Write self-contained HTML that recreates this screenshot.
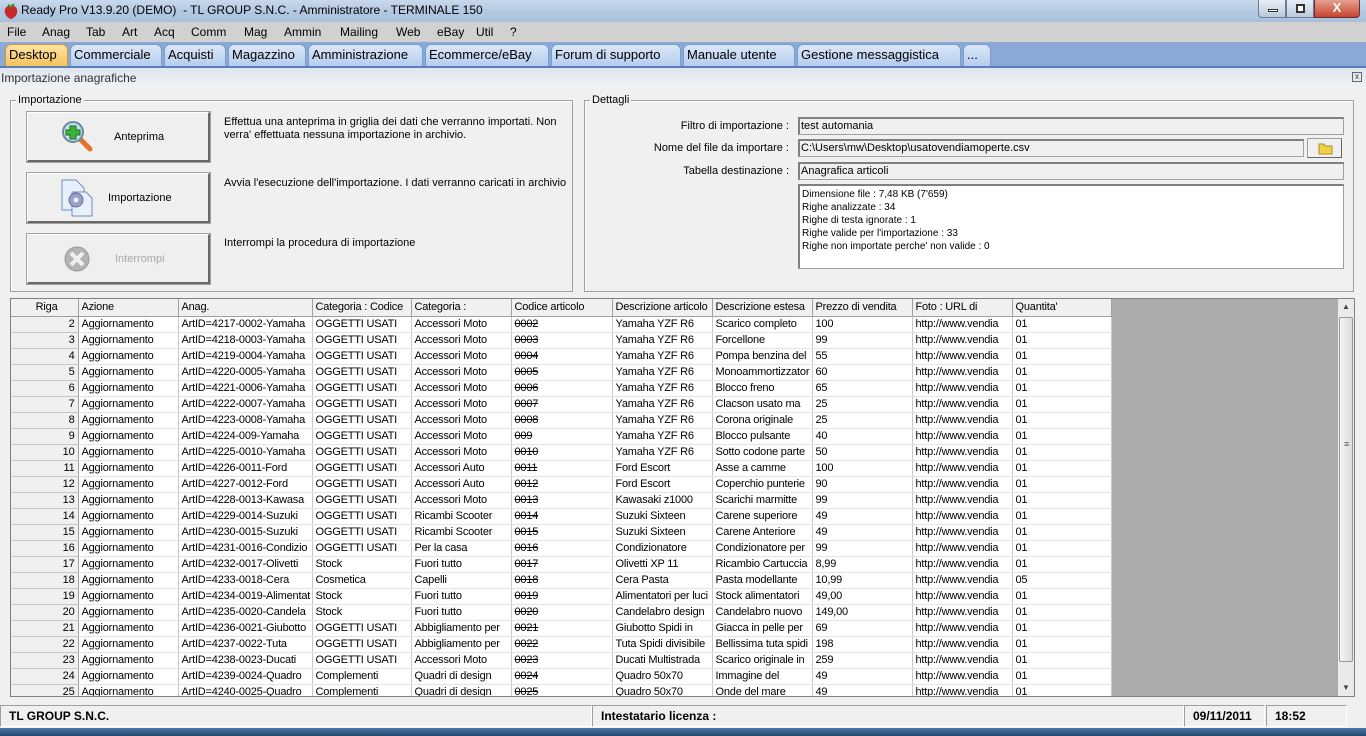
<!DOCTYPE html>
<html><head><meta charset="utf-8"><style>
*{box-sizing:border-box;margin:0;padding:0}
body{width:1366px;height:736px;overflow:hidden;background:#f0f0f0;font-family:"Liberation Sans",sans-serif;font-size:11px;color:#000;position:relative}
.abs{position:absolute}
#title{left:0;top:0;width:1366px;height:22px;background:linear-gradient(#c9d9ec,#b4c9e2 50%,#a9c0dc);}
#title span{position:absolute;left:21px;top:3px;font-size:12px;color:#000}
#menu{left:0;top:22px;width:1366px;height:20px;background:#d1d1d1;font-size:12px}
#menu span{position:absolute;top:3px}
#tabs{left:0;top:42px;width:1366px;height:26px;background:#8aa9d6;border-bottom:2px solid #5a7fb8}
.tab{position:absolute;top:2px;height:22px;background:linear-gradient(#dbe7f7,#b4cdef);border:1px solid #7c9cc9;border-bottom:none;border-radius:6px 6px 0 0;font-size:13px;padding:2px 4px 0 3px;white-space:nowrap}
#ph{left:0;top:68px;width:1366px;height:20px;background:linear-gradient(#dfe6ef,#f0f2f5);font-size:12px;color:#333}
.grp{border:1px solid #a0a0a0;box-shadow:inset 1px 1px 0 #fff}
.lg{position:absolute;top:-7px;background:#f0f0f0;padding:0 2px;font-size:11px}
.btn{position:absolute;width:183px;height:50px;background:#efefef;border:1px solid #fff;border-right:2px solid #696969;border-bottom:2px solid #696969;outline:1px solid #a0a0a0;font-size:11px}
.btn span{position:absolute;top:18px}
.desc{position:absolute;font-size:11px;line-height:13px;width:340px}
.lab{position:absolute;width:200px;text-align:right;font-size:11px}
.fld{position:absolute;height:18px;background:#f0f0f0;border:1px solid #a0a0a0;border-top:2px solid #808080;border-left:2px solid #808080;padding:1px 0 0 1px;font-size:11px}
#grid{left:10px;top:298px;width:1345px;height:399px;border:1px solid #808080;background:#ababab;overflow:hidden}
table{border-collapse:collapse;table-layout:fixed;width:1100px;background:#fff;position:absolute;left:0;top:0}
td,th{height:16px;border-right:1px solid #c8c8c8;border-bottom:1px solid #e4e4e4;white-space:nowrap;overflow:hidden;padding:0 3px;font-weight:normal;text-align:left;font-size:11px;line-height:14px;letter-spacing:-0.2px}
th{background:#f0f0f0;height:17px;border-right:1px solid #a0a0a0;border-bottom:1px solid #a0a0a0}
td.r{background:#f0f0f0;text-align:right;border-right:1px solid #a0a0a0;border-bottom:1px solid #c8c8c8}
td.s{text-decoration:line-through}
#sb{left:1327px;top:0;width:16px;height:397px;background:#eaeaea}
#status{left:0;top:705px;width:1366px;height:23px;font-size:12px;font-weight:normal}
.sp{position:absolute;top:0;height:22px;border:1px solid #a0a0a0;border-right-color:#fff;border-bottom-color:#fff;padding:3px 0 0 8px}
#task{left:0;top:728px;width:1366px;height:8px;background:linear-gradient(#4a7aa8,#23466e)}
</style></head><body>
<div id="title" class="abs">
<svg class="abs" style="left:3px;top:3px" width="16" height="16"><path d="M8 3 C3 2 1 6 2 10 C3 14 7 16 8 16 C9 16 13 14 14 10 C15 6 13 2 8 3Z" fill="#c8282a"/><path d="M5 2 L8 4 L11 1" stroke="#3a8a2a" stroke-width="2" fill="none"/></svg>
<span>Ready Pro V13.9.20 (DEMO)&nbsp; - TL GROUP S.N.C. - Amministratore - TERMINALE 150</span>
<div class="abs" style="left:1258px;top:0;width:28px;height:18px;border:1px solid #6a7d94;border-top:none;background:linear-gradient(#e8eef6,#b9c9dc);border-radius:0 0 0 4px"><div class="abs" style="left:9px;top:9px;width:10px;height:3px;background:#fff;border:1px solid #333"></div></div>
<div class="abs" style="left:1286px;top:0;width:28px;height:18px;border:1px solid #6a7d94;border-top:none;background:linear-gradient(#e8eef6,#b9c9dc)"><div class="abs" style="left:9px;top:4px;width:9px;height:9px;border:2px solid #333;background:#fff"></div></div>
<div class="abs" style="left:1314px;top:0;width:46px;height:18px;border:1px solid #6a3030;border-top:none;background:linear-gradient(#e5a090,#c7442e);border-radius:0 0 4px 0;color:#fff;font-weight:bold;font-size:13px;text-align:center;line-height:16px">X</div>
</div>
<div id="menu" class="abs">
<span style="left:7px">File</span><span style="left:42px">Anag</span><span style="left:86px">Tab</span><span style="left:122px">Art</span><span style="left:154px">Acq</span><span style="left:191px">Comm</span><span style="left:244px">Mag</span><span style="left:284px">Ammin</span><span style="left:340px">Mailing</span><span style="left:396px">Web</span><span style="left:437px">eBay</span><span style="left:476px">Util</span><span style="left:510px">?</span>
</div>
<div id="tabs" class="abs">
<div class="tab" style="left:5px;width:63px;background:linear-gradient(#fde3a6,#f6c25a);border-color:#c59a40">Desktop</div>
<div class="tab" style="left:70px;width:92px">Commerciale</div>
<div class="tab" style="left:164px;width:62px">Acquisti</div>
<div class="tab" style="left:228px;width:78px">Magazzino</div>
<div class="tab" style="left:308px;width:115px">Amministrazione</div>
<div class="tab" style="left:425px;width:124px">Ecommerce/eBay</div>
<div class="tab" style="left:551px;width:130px">Forum di supporto</div>
<div class="tab" style="left:683px;width:112px">Manuale utente</div>
<div class="tab" style="left:797px;width:164px">Gestione messaggistica</div>
<div class="tab" style="left:963px;width:28px">...</div>
</div>
<div id="ph" class="abs"><span class="abs" style="left:1px;top:3px">Importazione anagrafiche</span><div class="abs" style="left:1352px;top:4px;width:10px;height:10px;border:1px solid #666;font-size:8px;line-height:8px;text-align:center">x</div></div>

<div class="abs grp" style="left:10px;top:100px;width:563px;height:192px"><span class="lg" style="left:5px">Importazione</span></div>
<div class="btn" style="left:27px;top:112px">
<svg class="abs" style="left:32px;top:6px" width="34" height="34"><line x1="18" y1="18" x2="30" y2="30" stroke="#e8702a" stroke-width="5" stroke-linecap="round"/><circle cx="13" cy="13" r="10" fill="#bfe0ef" stroke="#6a8aa0" stroke-width="2"/><path d="M10 7h6v4h4v5h-4v4h-6v-4h-4v-5h4z" fill="#3cb43c" stroke="#1f6f1f"/></svg>
<span style="left:86px">Anteprima</span></div>
<div class="btn" style="left:27px;top:173px">
<svg class="abs" style="left:32px;top:4px" width="34" height="40"><path d="M2 2h14l8 8v22H2z" fill="#e8f0fa" stroke="#6b8fc0"/><path d="M12 14h14l6 6v18H12z" fill="#e8f0fa" stroke="#6b8fc0"/><circle cx="16" cy="22" r="7" fill="#9aa0c8" stroke="#6a6f99"/><circle cx="16" cy="22" r="2.5" fill="#e8f0fa"/></svg>
<span style="left:80px">Importazione</span></div>
<div class="btn" style="left:27px;top:234px">
<svg class="abs" style="left:35px;top:10px" width="28" height="28"><circle cx="14" cy="14" r="12" fill="#b4b4b4" stroke="#9a9a9a"/><path d="M8 8l12 12M20 8L8 20" stroke="#f0f0f0" stroke-width="4"/></svg>
<span style="left:87px;color:#a8a8a8">Interrompi</span></div>
<div class="desc" style="left:224px;top:116px">Effettua una anteprima in griglia dei dati che verranno importati. Non verra' effettuata nessuna importazione in archivio.</div>
<div class="desc" style="left:224px;top:177px;width:360px">Avvia l'esecuzione dell'importazione. I dati verranno caricati in archivio</div>
<div class="desc" style="left:224px;top:237px">Interrompi la procedura di importazione</div>

<div class="abs grp" style="left:584px;top:100px;width:770px;height:192px"><span class="lg" style="left:5px">Dettagli</span></div>
<div class="lab" style="left:589px;top:120px">Filtro di importazione :</div>
<div class="lab" style="left:589px;top:142px">Nome del file da importare :</div>
<div class="lab" style="left:589px;top:165px">Tabella destinazione :</div>
<div class="fld" style="left:798px;top:117px;width:546px">test automania</div>
<div class="fld" style="left:798px;top:139px;width:506px">C:\Users\mw\Desktop\usatovendiamoperte.csv</div>
<div class="abs" style="left:1307px;top:138px;width:35px;height:20px;border:1px solid #a0a0a0;border-right-color:#666;border-bottom-color:#666;background:#f0f0f0"><svg class="abs" style="left:10px;top:2px" width="16" height="14"><path d="M1 3h5l1 2h7v8H1z" fill="#f3d04a" stroke="#b08a20"/></svg></div>
<div class="fld" style="left:798px;top:162px;width:546px">Anagrafica articoli</div>
<div class="abs" style="left:798px;top:184px;width:546px;height:85px;background:#fff;border:1px solid #a0a0a0;border-top:2px solid #808080;border-left:2px solid #808080;padding:2px 0 0 2px;font-size:10px;line-height:13px">Dimensione file : 7,48 KB (7'659)<br>Righe analizzate : 34<br>Righe di testa ignorate : 1<br>Righe valide per l'importazione : 33<br>Righe non importate perche' non valide : 0</div>

<div id="grid" class="abs">
<table>
<colgroup><col style="width:67px"><col style="width:100px"><col style="width:134px"><col style="width:99px"><col style="width:100px"><col style="width:101px"><col style="width:100px"><col style="width:100px"><col style="width:100px"><col style="width:100px"><col style="width:99px"></colgroup>
<tr><th style="text-align:right;padding-right:20px">Riga</th><th>Azione</th><th>Anag.</th><th>Categoria : Codice</th><th>Categoria :</th><th>Codice articolo</th><th>Descrizione articolo</th><th>Descrizione estesa</th><th>Prezzo di vendita</th><th>Foto : URL di</th><th>Quantita'</th></tr>
<tr><td class="r">2</td><td>Aggiornamento</td><td>ArtID=4217-0002-Yamaha</td><td>OGGETTI USATI</td><td>Accessori Moto</td><td class="s">0002</td><td>Yamaha YZF R6</td><td>Scarico completo</td><td>100</td><td>http://www.vendia</td><td>01</td></tr>
<tr><td class="r">3</td><td>Aggiornamento</td><td>ArtID=4218-0003-Yamaha</td><td>OGGETTI USATI</td><td>Accessori Moto</td><td class="s">0003</td><td>Yamaha YZF R6</td><td>Forcellone</td><td>99</td><td>http://www.vendia</td><td>01</td></tr>
<tr><td class="r">4</td><td>Aggiornamento</td><td>ArtID=4219-0004-Yamaha</td><td>OGGETTI USATI</td><td>Accessori Moto</td><td class="s">0004</td><td>Yamaha YZF R6</td><td>Pompa benzina del</td><td>55</td><td>http://www.vendia</td><td>01</td></tr>
<tr><td class="r">5</td><td>Aggiornamento</td><td>ArtID=4220-0005-Yamaha</td><td>OGGETTI USATI</td><td>Accessori Moto</td><td class="s">0005</td><td>Yamaha YZF R6</td><td>Monoammortizzator</td><td>60</td><td>http://www.vendia</td><td>01</td></tr>
<tr><td class="r">6</td><td>Aggiornamento</td><td>ArtID=4221-0006-Yamaha</td><td>OGGETTI USATI</td><td>Accessori Moto</td><td class="s">0006</td><td>Yamaha YZF R6</td><td>Blocco freno</td><td>65</td><td>http://www.vendia</td><td>01</td></tr>
<tr><td class="r">7</td><td>Aggiornamento</td><td>ArtID=4222-0007-Yamaha</td><td>OGGETTI USATI</td><td>Accessori Moto</td><td class="s">0007</td><td>Yamaha YZF R6</td><td>Clacson usato ma</td><td>25</td><td>http://www.vendia</td><td>01</td></tr>
<tr><td class="r">8</td><td>Aggiornamento</td><td>ArtID=4223-0008-Yamaha</td><td>OGGETTI USATI</td><td>Accessori Moto</td><td class="s">0008</td><td>Yamaha YZF R6</td><td>Corona originale</td><td>25</td><td>http://www.vendia</td><td>01</td></tr>
<tr><td class="r">9</td><td>Aggiornamento</td><td>ArtID=4224-009-Yamaha</td><td>OGGETTI USATI</td><td>Accessori Moto</td><td class="s">009</td><td>Yamaha YZF R6</td><td>Blocco pulsante</td><td>40</td><td>http://www.vendia</td><td>01</td></tr>
<tr><td class="r">10</td><td>Aggiornamento</td><td>ArtID=4225-0010-Yamaha</td><td>OGGETTI USATI</td><td>Accessori Moto</td><td class="s">0010</td><td>Yamaha YZF R6</td><td>Sotto codone parte</td><td>50</td><td>http://www.vendia</td><td>01</td></tr>
<tr><td class="r">11</td><td>Aggiornamento</td><td>ArtID=4226-0011-Ford</td><td>OGGETTI USATI</td><td>Accessori Auto</td><td class="s">0011</td><td>Ford Escort</td><td>Asse a camme</td><td>100</td><td>http://www.vendia</td><td>01</td></tr>
<tr><td class="r">12</td><td>Aggiornamento</td><td>ArtID=4227-0012-Ford</td><td>OGGETTI USATI</td><td>Accessori Auto</td><td class="s">0012</td><td>Ford Escort</td><td>Coperchio punterie</td><td>90</td><td>http://www.vendia</td><td>01</td></tr>
<tr><td class="r">13</td><td>Aggiornamento</td><td>ArtID=4228-0013-Kawasa</td><td>OGGETTI USATI</td><td>Accessori Moto</td><td class="s">0013</td><td>Kawasaki z1000</td><td>Scarichi marmitte</td><td>99</td><td>http://www.vendia</td><td>01</td></tr>
<tr><td class="r">14</td><td>Aggiornamento</td><td>ArtID=4229-0014-Suzuki</td><td>OGGETTI USATI</td><td>Ricambi Scooter</td><td class="s">0014</td><td>Suzuki Sixteen</td><td>Carene superiore</td><td>49</td><td>http://www.vendia</td><td>01</td></tr>
<tr><td class="r">15</td><td>Aggiornamento</td><td>ArtID=4230-0015-Suzuki</td><td>OGGETTI USATI</td><td>Ricambi Scooter</td><td class="s">0015</td><td>Suzuki Sixteen</td><td>Carene Anteriore</td><td>49</td><td>http://www.vendia</td><td>01</td></tr>
<tr><td class="r">16</td><td>Aggiornamento</td><td>ArtID=4231-0016-Condizio</td><td>OGGETTI USATI</td><td>Per la casa</td><td class="s">0016</td><td>Condizionatore</td><td>Condizionatore per</td><td>99</td><td>http://www.vendia</td><td>01</td></tr>
<tr><td class="r">17</td><td>Aggiornamento</td><td>ArtID=4232-0017-Olivetti</td><td>Stock</td><td>Fuori tutto</td><td class="s">0017</td><td>Olivetti XP 11</td><td>Ricambio Cartuccia</td><td>8,99</td><td>http://www.vendia</td><td>01</td></tr>
<tr><td class="r">18</td><td>Aggiornamento</td><td>ArtID=4233-0018-Cera</td><td>Cosmetica</td><td>Capelli</td><td class="s">0018</td><td>Cera Pasta</td><td>Pasta modellante</td><td>10,99</td><td>http://www.vendia</td><td>05</td></tr>
<tr><td class="r">19</td><td>Aggiornamento</td><td>ArtID=4234-0019-Alimentat</td><td>Stock</td><td>Fuori tutto</td><td class="s">0019</td><td>Alimentatori per luci</td><td>Stock alimentatori</td><td>49,00</td><td>http://www.vendia</td><td>01</td></tr>
<tr><td class="r">20</td><td>Aggiornamento</td><td>ArtID=4235-0020-Candela</td><td>Stock</td><td>Fuori tutto</td><td class="s">0020</td><td>Candelabro design</td><td>Candelabro nuovo</td><td>149,00</td><td>http://www.vendia</td><td>01</td></tr>
<tr><td class="r">21</td><td>Aggiornamento</td><td>ArtID=4236-0021-Giubotto</td><td>OGGETTI USATI</td><td>Abbigliamento per</td><td class="s">0021</td><td>Giubotto Spidi in</td><td>Giacca in pelle per</td><td>69</td><td>http://www.vendia</td><td>01</td></tr>
<tr><td class="r">22</td><td>Aggiornamento</td><td>ArtID=4237-0022-Tuta</td><td>OGGETTI USATI</td><td>Abbigliamento per</td><td class="s">0022</td><td>Tuta Spidi divisibile</td><td>Bellissima tuta spidi</td><td>198</td><td>http://www.vendia</td><td>01</td></tr>
<tr><td class="r">23</td><td>Aggiornamento</td><td>ArtID=4238-0023-Ducati</td><td>OGGETTI USATI</td><td>Accessori Moto</td><td class="s">0023</td><td>Ducati Multistrada</td><td>Scarico originale in</td><td>259</td><td>http://www.vendia</td><td>01</td></tr>
<tr><td class="r">24</td><td>Aggiornamento</td><td>ArtID=4239-0024-Quadro</td><td>Complementi</td><td>Quadri di design</td><td class="s">0024</td><td>Quadro 50x70</td><td>Immagine del</td><td>49</td><td>http://www.vendia</td><td>01</td></tr>
<tr><td class="r">25</td><td>Aggiornamento</td><td>ArtID=4240-0025-Quadro</td><td>Complementi</td><td>Quadri di design</td><td class="s">0025</td><td>Quadro 50x70</td><td>Onde del mare</td><td>49</td><td>http://www.vendia</td><td>01</td></tr>
</table>
<div id="sb" class="abs"><span class="abs" style="left:4px;top:3px;font-size:8px;color:#444">▲</span><div class="abs" style="left:1px;top:18px;width:14px;height:345px;border:1px solid #999;border-radius:2px;background:linear-gradient(90deg,#f4f4f4,#dcdcdc)"></div><span class="abs" style="left:6px;top:140px;font-size:9px;color:#555">≡</span><span class="abs" style="left:4px;top:384px;font-size:8px;color:#444">▼</span></div>
</div>

<div id="status" class="abs">
<div class="sp" style="left:0;width:592px;font-weight:bold">TL GROUP S.N.C.</div>
<div class="sp" style="left:592px;width:592px;font-weight:bold">Intestatario licenza :</div>
<div class="sp" style="left:1184px;width:81px;font-weight:bold">09/11/2011</div>
<div class="sp" style="left:1266px;width:81px;font-weight:bold">18:52</div>
</div>
<div id="task" class="abs"></div>
</body></html>
